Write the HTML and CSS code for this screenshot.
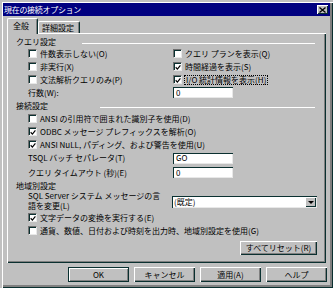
FILE: index.html
```html
<!DOCTYPE html>
<html lang="ja">
<head>
<meta charset="utf-8">
<title>現在の接続オプション</title>
<link rel="stylesheet" href="styles.css">
</head>
<body>
<div class="window">
  <div class="titlebar">
    <span class="title">現在の接続オプション</span>
    <span class="close"><svg width="7" height="6" viewBox="0 0 7 6"><path d="M0.5 0.5 L6.5 5.5 M6.5 0.5 L0.5 5.5" stroke="#000" stroke-width="1.3" fill="none"/></svg></span>
  </div>
  <div class="tabs">
    <div class="tab active">全般</div>
    <div class="tab">詳細設定</div>
  </div>
  <div class="panel">
    <div class="group-head gh1"><span>クエリ設定</span><i class="rule r1"></i></div>
    <div class="grid2">
      <div class="row"><span class="cb"></span>件数表示しない(O)</div>
      <div class="row"><span class="cb"></span>クエリ プランを表示(Q)</div>
      <div class="row"><span class="cb"></span>非実行(X)</div>
      <div class="row"><span class="cb on"><svg width="7" height="7" viewBox="0 0 7 7"><path d="M0.8 3.2 L2.8 5.3 L6.3 1" stroke="#000" stroke-width="1.4" fill="none"/></svg></span>時間経過を表示(S)</div>
      <div class="row"><span class="cb"></span>文法解析クエリのみ(P)</div>
      <div class="row"><span class="cb on"><svg width="7" height="7" viewBox="0 0 7 7"><path d="M0.8 3.2 L2.8 5.3 L6.3 1" stroke="#000" stroke-width="1.4" fill="none"/></svg></span><span class="focus">I/O 統計情報を表示(H)</span></div>
      <div class="row">行数(W):</div>
      <div class="row"><span class="field">0</span></div>
    </div>
    <div class="group-head gh2"><span>接続設定</span><i class="rule r2"></i></div>
    <div class="single">
      <div class="row"><span class="cb"></span>ANSI の引用符で囲まれた識別子を使用(D)</div>
      <div class="row"><span class="cb on"><svg width="7" height="7" viewBox="0 0 7 7"><path d="M0.8 3.2 L2.8 5.3 L6.3 1" stroke="#000" stroke-width="1.4" fill="none"/></svg></span>ODBC メッセージ プレフィックスを解析(O)</div>
      <div class="row"><span class="cb on"><svg width="7" height="7" viewBox="0 0 7 7"><path d="M0.8 3.2 L2.8 5.3 L6.3 1" stroke="#000" stroke-width="1.4" fill="none"/></svg></span>ANSI NuLL, パディング、および警告を使用(U)</div>
      <div class="row labeled r-tsql"><span class="lbl">TSQL バッチ セパレータ(T)</span><span class="field">GO</span></div>
      <div class="row labeled r-timeout"><span class="lbl">クエリ タイムアウト (秒)(E)</span><span class="field">0</span></div>
    </div>
    <div class="group-head gh3"><span>地域別設定</span></div>
    <div class="single">
      <div class="lang">
        <span class="lang-text"><span class="ln">SQL Server システム メッセージの言</span><span class="ln">語を変更(L)</span></span>
        <span class="combo"><span class="combo-val">(既定)</span><span class="drop"><i class="arrow"></i></span></span>
      </div>
      <div class="row"><span class="cb on"><svg width="7" height="7" viewBox="0 0 7 7"><path d="M0.8 3.2 L2.8 5.3 L6.3 1" stroke="#000" stroke-width="1.4" fill="none"/></svg></span>文字データの変換を実行する(E)</div>
      <div class="row"><span class="cb"></span>通貨、数値、日付および時刻を出力時、地域別設定を使用(G)</div>
    </div>
    <div class="reset-row"><button class="btn reset">すべてリセット(R)</button></div>
  </div>
  <div class="buttons">
    <button class="btn default">OK</button>
    <button class="btn">キャンセル</button>
    <button class="btn">適用(A)</button>
    <button class="btn">ヘルプ</button>
  </div>
</div>
</body>
</html>
```

FILE: styles.css
```css
* { box-sizing: border-box; }
html, body { margin: 0; padding: 0; }
body {
  width: 333px;
  height: 288px;
  overflow: hidden;
  background: #c0c0c0;
  font-family: "Noto Sans CJK JP", "Noto Sans", sans-serif;
  font-size: 8px;
  line-height: 1;
  color: #000;
}
.window {
  width: 333px;
  height: 288px;
  background: #c0c0c0;
  padding: 3px;
  display: flex;
  flex-direction: column;
  box-shadow: inset 2px 2px 0 #c0c0c0, inset 3px 3px 0 #fff, inset -1px -1px 0 #0a3030, inset -3px -3px 0 #808080;
}
.titlebar {
  height: 13px;
  background: #000080;
  color: #fff;
  display: flex;
  align-items: center;
  justify-content: space-between;
  padding-left: 1px;
  padding-right: 2px;
}
.title { font-size: 8px; letter-spacing: -0.3px; }
.close {
  width: 11px;
  height: 9px;
  background: #c0c0c0;
  box-shadow: inset 1px 1px 0 #fff, inset -1px -1px 0 #0a3030;
  display: flex;
  align-items: center;
  justify-content: center;
}
.tabs {
  height: 17px;
  display: flex;
  align-items: flex-end;
  padding-left: 4px;
}
.tab {
  height: 12px;
  width: 42px;
  padding-left: 3px;
  display: flex;
  align-items: center;
  border-top: 1px solid #fff;
  border-left: 1px solid #fff;
  border-right: 1px solid #0a3030;
  border-radius: 2px 2px 0 0;
  box-shadow: inset -1px 0 0 #808080;
}
.tab.active {
  width: 31px;
  height: 16px;
  padding-left: 5px;
  padding-bottom: 2px;
  margin-bottom: -1px;
  background: #c0c0c0;
  position: relative;
  z-index: 1;
}
.panel {
  margin-left: 4px;
  width: 319px;
  height: 230px;
  padding: 3px 9px 0 9px;
  box-shadow: inset 1px 1px 0 #fff, inset -1px -1px 0 #0a3030, inset -2px -2px 0 #808080;
  display: flex;
  flex-direction: column;
}
.group-head {
  display: flex;
  align-items: center;
  height: 11px;
}
.gh2 { height: 13px; }
.rule {
  flex: 1;
  height: 1px;
  background: #fff;
  align-self: flex-start;
  margin-right: 2px;
}
.r1 { margin-left: 26px; margin-top: 7px; }
.r2 { margin-left: 52px; margin-top: 8px; }
.grid2 {
  display: grid;
  grid-template-columns: 145px 1fr;
  padding-left: 12px;
}
.single { padding-left: 12px; }
.row {
  height: 13px;
  display: flex;
  align-items: center;
  white-space: nowrap;
}
.cb {
  width: 9px;
  height: 9px;
  margin-right: 3px;
  background: #fff;
  border-top: 1px solid #707070;
  border-left: 1px solid #707070;
  border-right: 1px solid #e8e8e8;
  border-bottom: 1px solid #e8e8e8;
  box-shadow: inset 1px 1px 0 #0a3030;
  display: flex;
  align-items: center;
  justify-content: center;
  padding: 1px 0 0 1px;
  flex: none;
}
.focus { outline: 1px dotted #000; padding: 0 1px; }
.field {
  width: 60px;
  height: 11px;
  background: #fff;
  box-shadow: inset 1px 1px 0 #0a3030, inset -1px -1px 0 #e8e8e8;
  display: flex;
  align-items: center;
  padding-left: 3px;
}
.labeled .lbl { width: 145px; }
.r-tsql { height: 14px; }
.r-timeout { height: 15px; }
.lang {
  height: 20px;
  display: flex;
}
.lang-text {
  width: 144px;
  display: flex;
  flex-direction: column;
}
.ln {
  display: block;
  height: 10px;
  line-height: 10px;
  white-space: nowrap;
}
.combo {
  width: 145px;
  height: 12px;
  margin-top: 5px;
  background: #fff;
  box-shadow: inset 1px 1px 0 #0a3030, inset -1px -1px 0 #e8e8e8;
  display: flex;
  align-items: center;
  justify-content: space-between;
  padding: 1px 1px 1px 2px;
}
.drop {
  width: 11px;
  height: 10px;
  background: #c0c0c0;
  box-shadow: inset 1px 1px 0 #fff, inset -1px -1px 0 #0a3030;
  display: flex;
  align-items: center;
  justify-content: center;
}
.arrow {
  width: 0;
  height: 0;
  border-left: 3px solid transparent;
  border-right: 3px solid transparent;
  border-top: 3px solid #000;
}
.reset-row {
  display: flex;
  justify-content: flex-end;
  margin-top: 4px;
}
.btn {
  font-family: "Noto Sans CJK JP", "Noto Sans", sans-serif;
  font-size: 8px;
  line-height: 1;
  color: #000;
  background: #c0c0c0;
  border: none;
  padding: 0;
  margin: 0;
  height: 15px;
  width: 61px;
  box-shadow: inset 1px 1px 0 #fff, inset -1px -1px 0 #0a3030, inset -2px -2px 0 #808080;
  display: flex;
  align-items: center;
  justify-content: center;
}
.btn.reset { width: 77px; height: 14px; }
.btn.default {
  border: 1px solid #0a3030;
  box-shadow: inset 1px 1px 0 #fff, inset -1px -1px 0 #808080;
}
.buttons {
  margin-top: 4px;
  display: flex;
  justify-content: flex-end;
  gap: 5px;
  padding-right: 3px;
}
```
